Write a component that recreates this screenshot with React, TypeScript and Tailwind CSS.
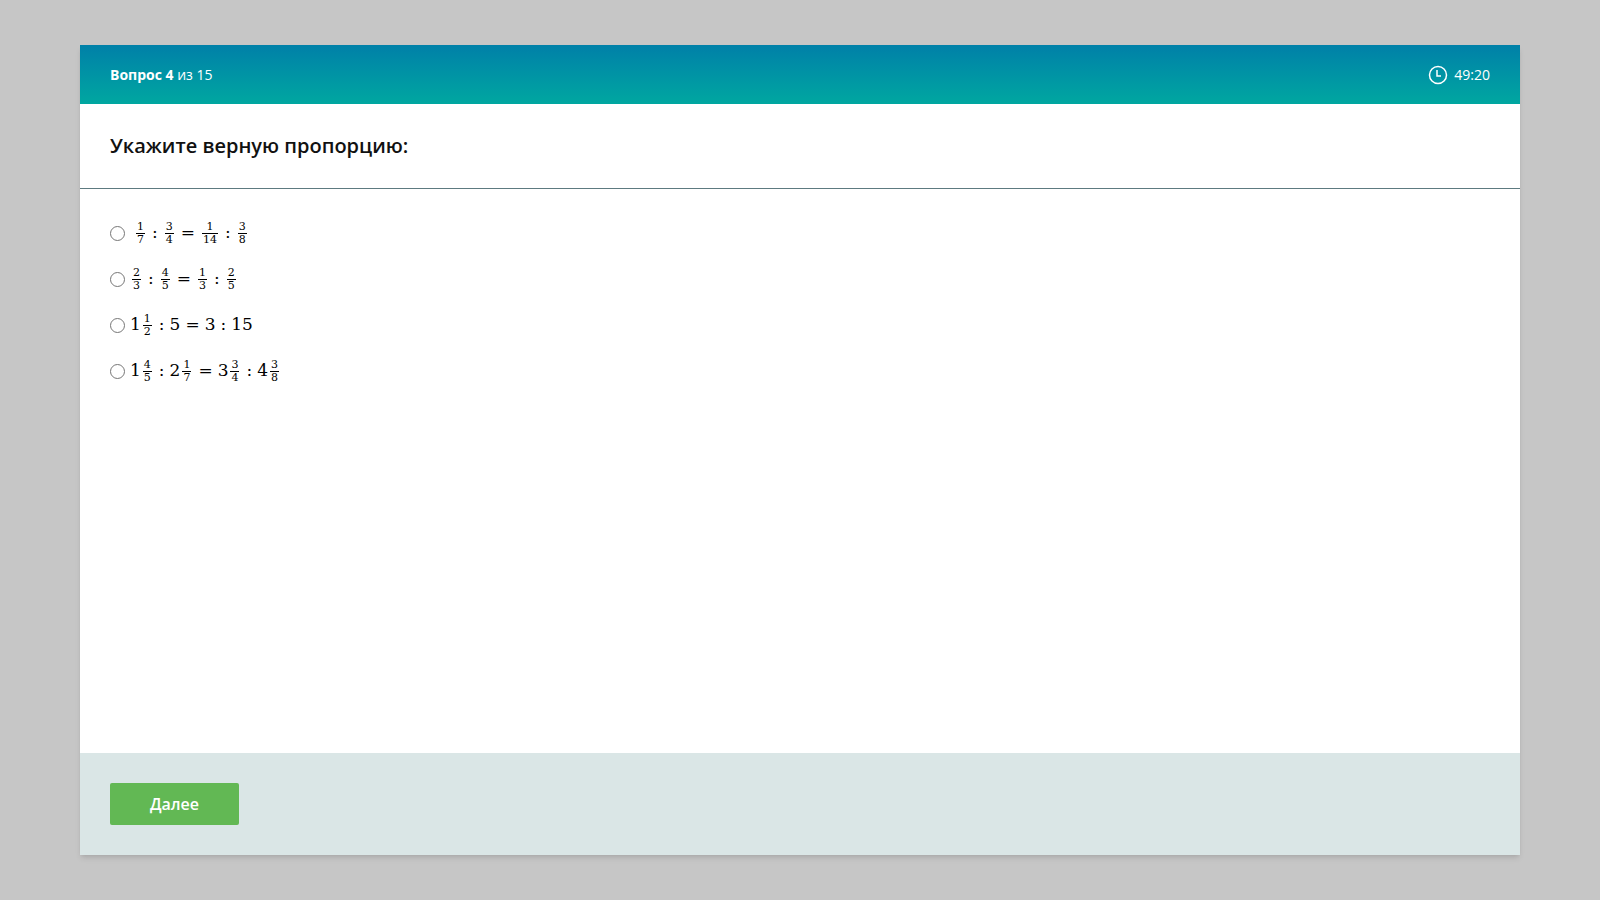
import React from "react";

const F = ({ n, d }: { n: string; d: string }) => (
  <span className="inline-flex flex-col items-center align-middle mx-[2px] text-[11px] leading-[12px]">
    <span className="px-[1px]">{n}</span>
    <span className="border-t border-black w-full text-center px-[1px]">{d}</span>
  </span>
);
const Op = ({ c }: { c: string }) => <span className="mx-[5px]">{c}</span>;

const Radio = () => (
  <span className="inline-block w-[15px] h-[15px] rounded-full border border-[#767676] bg-white mr-[5px] align-middle" />
);

export default function App() {
  const serif = { fontFamily: '"DejaVu Serif","Liberation Serif",serif' };
  return (
    <div className="w-[1600px] h-[900px] bg-[#c6c6c6] pt-[45px]" style={{ fontFamily: '"Open Sans",sans-serif' }}>
      <div className="mx-[80px] w-[1440px] bg-white shadow-md flex flex-col h-[810px]">
        <div className="h-[59px] bg-gradient-to-b from-[#0080a8] to-[#00a7a0] flex items-center justify-between px-[30px] text-white text-[14px]">
          <div><b>Вопрос 4</b> из 15</div>
          <div className="flex items-center gap-[6px]">
            <svg width="20" height="20" viewBox="0 0 20 20" fill="none" stroke="white" strokeWidth="1.5">
              <circle cx="10" cy="10" r="8.5" />
              <path d="M9 5v6h4" />
            </svg>
            <span>49:20</span>
          </div>
        </div>
        <div className="h-[85px] border-b border-[#5d7a80] flex items-center px-[30px] text-[20px] font-semibold text-[#111]">
          Укажите верную пропорцию:
        </div>
        <div className="flex-1 px-[30px] pt-[28px] flex flex-col gap-[14px] text-[17px]" style={serif}>
          <div className="flex items-center h-[32px]"><Radio /><span className="ml-[4px]" /><F n="1" d="7" /><Op c=":" /><F n="3" d="4" /><Op c="=" /><F n="1" d="14" /><Op c=":" /><F n="3" d="8" /></div>
          <div className="flex items-center h-[32px]"><Radio /><F n="2" d="3" /><Op c=":" /><F n="4" d="5" /><Op c="=" /><F n="1" d="3" /><Op c=":" /><F n="2" d="5" /></div>
          <div className="flex items-center h-[32px]"><Radio />1<F n="1" d="2" /><Op c=":" />5<Op c="=" />3<Op c=":" />15</div>
          <div className="flex items-center h-[32px]"><Radio />1<F n="4" d="5" /><Op c=":" />2<F n="1" d="7" /><Op c="=" />3<F n="3" d="4" /><Op c=":" />4<F n="3" d="8" /></div>
        </div>
        <div className="h-[102px] bg-[#dae6e6] flex items-center px-[30px]">
          <button className="w-[129px] h-[42px] bg-[#62b854] text-white font-semibold text-[16px] rounded-[2px]">Далее</button>
        </div>
      </div>
    </div>
  );
}
